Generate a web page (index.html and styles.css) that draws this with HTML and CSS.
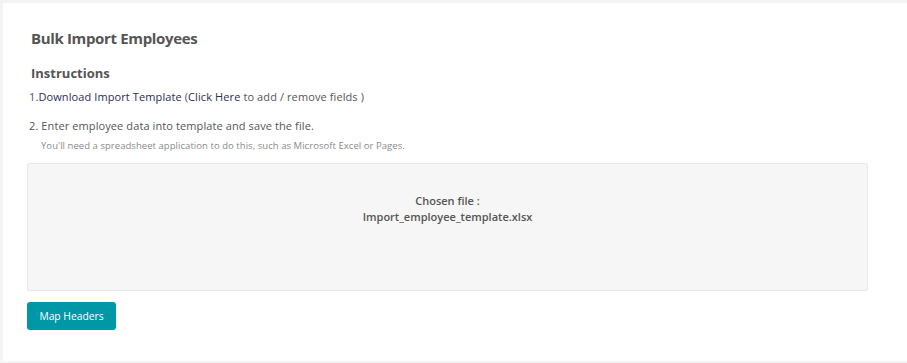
FILE: index.html
```html
<!DOCTYPE html>
<html>
<head>
<meta charset="utf-8">
<link rel="stylesheet" href="styles.css">
</head>
<body>
<div class="card">
  <h1 class="title">Bulk Import Employees</h1>
  <h2 class="subtitle">Instructions</h2>
  <p class="step">1.<a class="link">Download Import Template</a> (<a class="link">Click Here</a> to add / remove fields )</p>
  <p class="step step2">2. Enter employee data into template and save the file.</p>
  <p class="hint">You'll need a spreadsheet application to do this, such as Microsoft Excel or Pages.</p>
  <div class="dropzone">
    <div class="chosen">Chosen file :</div>
    <div class="filename">Import_employee_template.xlsx</div>
  </div>
  <button class="btn">Map Headers</button>
</div>
</body>
</html>
```
FILE: styles.css
```css
html, body {
  margin: 0;
  padding: 0;
  background: #f4f4f4;
  height: 363px;
  overflow: hidden;
}
body {
  padding: 3px 0 0 3px;
  box-sizing: border-box;
  font-family: "Open Sans", "Noto Sans", sans-serif;
  color: #555;
}
.card {
  background: #fff;
  height: 358px;
  box-sizing: border-box;
  padding: 24px 39px 0 24px;
}
.title {
  margin: 0 0 0 4px;
  font-size: 15px;
  font-weight: 700;
  color: #555;
  line-height: 22px;
  letter-spacing: -0.35px;
}
.subtitle {
  margin: 15px 0 0 4px;
  font-size: 13px;
  font-weight: 700;
  color: #555;
  line-height: 18px;
}
.step {
  margin: 7px 0 0 2px;
  font-size: 11px;
  line-height: 16px;
  color: #555;
  letter-spacing: 0.1px;
}
.link {
  color: #2d2d4f;
}
.step2 {
  margin-top: 13px;
}
.hint {
  margin: 5px 0 0 14px;
  font-size: 9.5px;
  line-height: 13px;
  color: #8a8a8a;
  letter-spacing: 0.05px;
}
.dropzone {
  margin-top: 11px;
  height: 128px;
  box-sizing: border-box;
  background: #f6f6f6;
  border: 1px solid #e8e8e8;
  border-radius: 2px;
  text-align: center;
  padding-top: 29px;
  font-size: 11px;
  font-weight: 600;
  color: #555;
  line-height: 16px;
}
.btn {
  margin-top: 11px;
  width: 89px;
  height: 28px;
  background: #0097a7;
  color: #fff;
  border: none;
  border-radius: 3px;
  font-family: "Open Sans", "Noto Sans", sans-serif;
  font-size: 10.3px;
  padding: 0;
}
```
